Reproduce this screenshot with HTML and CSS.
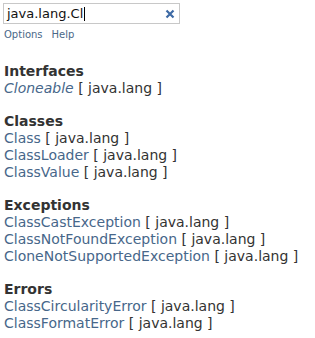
FILE: index.html
```html
<!DOCTYPE html>
<html>
<head>
<meta charset="utf-8">
<link rel="stylesheet" href="styles.css">
</head>
<body>
<div class="search">
  <div class="box">
    <span class="query">java.lang.Cl</span><span class="caret"></span>
    <svg class="clear" width="10" height="10" viewBox="0 0 10 10"><path d="M1.5 1.5 L8.5 8.5 M8.5 1.5 L1.5 8.5" stroke="#3d6aa5" stroke-width="2.2" stroke-linecap="butt"/></svg>
  </div>
  <div class="links"><a>Options</a><a>Help</a></div>
</div>
<div class="results">
  <div class="group">
    <div class="head">Interfaces</div>
    <div class="row"><a class="it">Cloneable</a> [ java.lang ]</div>
  </div>
  <div class="group">
    <div class="head">Classes</div>
    <div class="row"><a>Class</a> [ java.lang ]</div>
    <div class="row"><a>ClassLoader</a> [ java.lang ]</div>
    <div class="row"><a>ClassValue</a> [ java.lang ]</div>
  </div>
  <div class="group">
    <div class="head">Exceptions</div>
    <div class="row"><a>ClassCastException</a> [ java.lang ]</div>
    <div class="row"><a>ClassNotFoundException</a> [ java.lang ]</div>
    <div class="row"><a>CloneNotSupportedException</a> [ java.lang ]</div>
  </div>
  <div class="group">
    <div class="head">Errors</div>
    <div class="row"><a>ClassCircularityError</a> [ java.lang ]</div>
    <div class="row"><a>ClassFormatError</a> [ java.lang ]</div>
  </div>
</div>
</body>
</html>
```
FILE: styles.css
```css
html, body { background: #fff; }
body {
  margin: 0;
  padding: 3px 4px 0;
  font-family: "DejaVu Sans", sans-serif;
  font-size: 14px;
  color: #333;
}
.search { display: flex; flex-direction: column; }
.box {
  width: 172px;
  height: 19px;
  border: 1px solid #c8c8c8;
  margin-left: -1px;
  display: flex;
  align-items: center;
  padding-left: 3px;
  box-sizing: content-box;
  position: relative;
}
.query { color: #111; font-size: 13px; }
.caret { width: 1px; height: 14px; background: #000; margin-left: 1px; }
.clear { position: absolute; left: 161px; top: 5px; }
.links { display: flex; gap: 9px; margin-top: 4px; font-size: 10px; line-height: 13px; }
.links a { color: #4a6888; }
.results { margin-top: 22px; }
.group { margin-bottom: 16px; }
.group:last-child { margin-bottom: 0; }
.head { font-weight: bold; line-height: 17px; color: #333; }
.row { line-height: 17px; }
.row a { color: #47678a; }
.row a.it { font-style: italic; }
```
